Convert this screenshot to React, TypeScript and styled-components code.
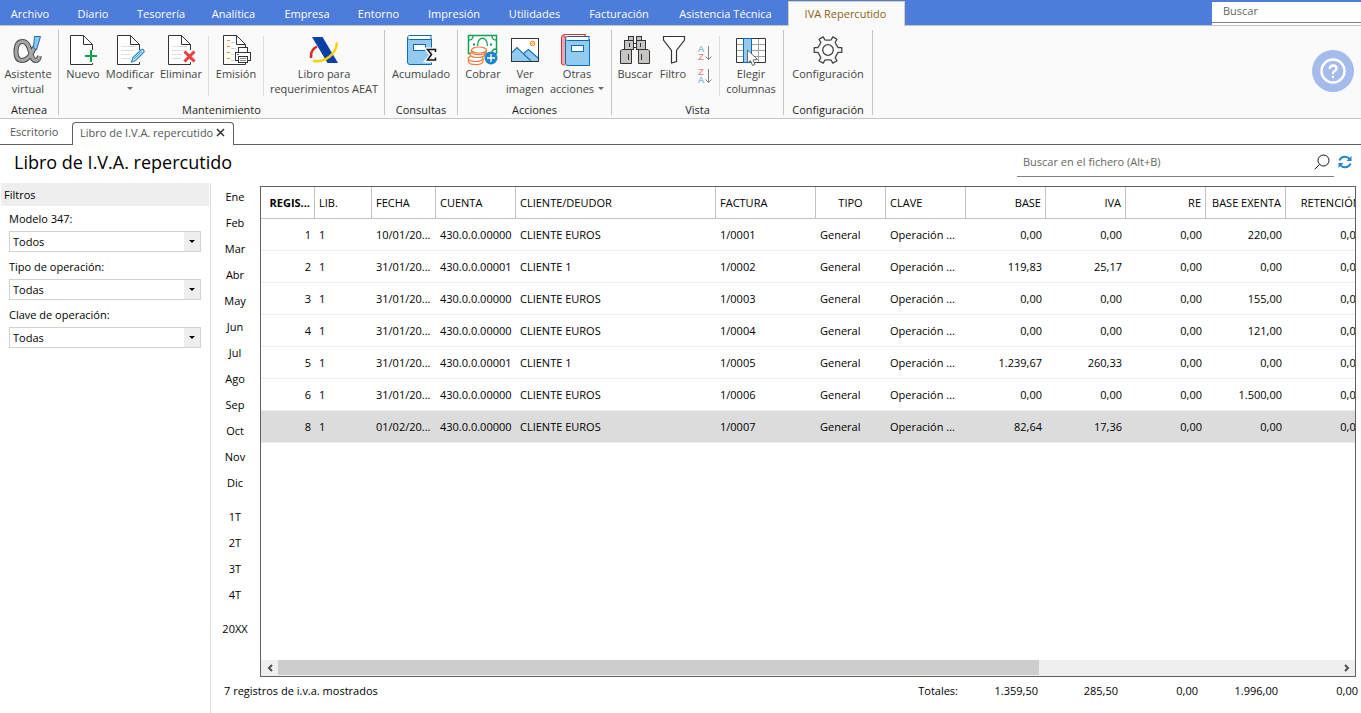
import React from 'react';
import styled, { createGlobalStyle, css } from 'styled-components';

const GlobalStyle = createGlobalStyle`
  *, *::before, *::after { box-sizing: border-box; }
  body {
    margin: 0;
    background: #fff;
    color: #000;
    font: 11px/15px "Open Sans", "Noto Sans", sans-serif;
  }
  button, input, select { font: inherit; color: inherit; border-radius: 0; }
  button { border: 0; padding: 0; margin: 0; background: none; cursor: pointer; }
`;

/* ---------- window frame ---------- */

const Page = styled.div`
  display: flex;
  flex-direction: column;
  min-height: 100vh;
  overflow: hidden;
`;

const MenuBar = styled.nav`
  display: flex;
  align-items: stretch;
  height: 26px;
  background: #4d7cdb;
  border-bottom: 1px solid #c3c3c3;
`;

const MenuItem = styled.button<{ $width: number; $active?: boolean }>`
  flex: none;
  width: ${p => p.$width}px;
  padding-top: 2px;
  color: #fff;
  white-space: nowrap;
  ${p => p.$active && css`
    margin: 1px 0 -1px;
    padding: 0 2px 2px 0;
    background: #fafafa;
    color: #8a6414;
    border: 1px solid #d8cfae;
    border-bottom: 0;
  `}
`;

const MenuSearch = styled.div`
  display: flex;
  width: 149px;
  margin-left: auto;
  padding-top: 2px;
  background: linear-gradient(#4d7cdb 2px, #fff 2px);
  input {
    width: 100%;
    height: 21px;
    padding: 0 11px 3px;
    border: 0;
    border-bottom: 1px solid #808080;
    outline: 0;
    background: #fff;
    &::placeholder { color: #666; opacity: 1; }
  }
`;

/* ---------- ribbon ---------- */

const Ribbon = styled.div`
  display: flex;
  height: 93px;
  background: #fafafa;
  border-bottom: 1px solid #c6c6c6;
`;

const Group = styled.section`
  display: flex;
  flex-direction: column;
  justify-content: space-between;
  flex: none;
  margin: 4px 0 3px;
  border-right: 1px solid #c3c3c3;
`;

const GroupTools = styled.div<{ $pad?: string }>`
  display: flex;
  align-items: flex-start;
  padding: ${p => p.$pad ?? '0'};
`;

const GroupTitle = styled.h2`
  margin: 0;
  font-size: 11px;
  font-weight: 400;
  line-height: 15px;
  text-align: center;
  color: #1a1a1a;
  height: 13px;
`;

const Tool = styled.button<{ $width: number }>`
  display: flex;
  flex-direction: column;
  align-items: center;
  flex: none;
  width: ${p => p.$width}px;
  padding-top: 4px;
  color: #444;
  white-space: nowrap;
  svg { display: block; flex: none; }
`;

const ToolLabel = styled.span`
  display: flex;
  flex-direction: column;
  align-items: center;
  line-height: 15px;
`;

const LabelLine = styled.span`
  display: flex;
  align-items: center;
  gap: 4px;
  min-height: 15px;
`;

const Caret = styled.i`
  border: 3px solid transparent;
  border-top-color: #666;
  border-bottom: 0;
`;

const Divider = styled.span`
  width: 1px;
  height: 60px;
  margin-top: 6px;
  background: #dedede;
`;

const SortTools = styled.div`
  display: flex;
  flex-direction: column;
  gap: 3px;
  width: 28px;
  padding: 13px 0 0 5px;
  svg { display: block; }
`;

const HelpButton = styled.button`
  align-self: center;
  margin: 0 7px 2px auto;
  width: 42px;
  height: 42px;
  border-radius: 50%;
  background: #a5bbec;
  display: grid;
  place-items: center;
`;

/* ---------- document tabs and heading ---------- */

const DocTabs = styled.div`
  display: flex;
  align-items: stretch;
  height: 26px;
  padding-top: 3px;
  border-bottom: 1px solid #606060;
  color: #555;
`;

const DocTab = styled.button<{ $width: number }>`
  width: ${p => p.$width}px;
  padding-left: 10px;
  padding-bottom: 4px;
  text-align: left;
`;

const ActiveTab = styled.div`
  display: flex;
  align-items: center;
  justify-content: space-between;
  width: 162px;
  margin-bottom: -1px;
  padding: 0 8px 4px 7px;
  background: #fff;
  border: 1px solid #606060;
  border-bottom: 0;
  border-radius: 4px 4px 0 0;
  white-space: nowrap;
  svg { display: block; }
`;

const Heading = styled.header`
  display: flex;
  align-items: flex-start;
  justify-content: space-between;
  height: 38px;
  padding: 5px 9px 0 14px;
  h1 {
    margin: 0;
    font-size: 18px;
    line-height: 24px;
    font-weight: 400;
  }
`;

const FileSearch = styled.div`
  display: flex;
  align-items: center;
  height: 27px;
  gap: 4px;
`;

const SearchField = styled.div`
  display: flex;
  align-items: center;
  width: 317px;
  height: 27px;
  padding: 0 4px 3px 6px;
  border-bottom: 1px solid #808080;
  input {
    flex: 1;
    min-width: 0;
    padding: 0;
    border: 0;
    outline: 0;
    background: none;
    &::placeholder { color: #666; opacity: 1; }
  }
`;

/* ---------- body ---------- */

const Body = styled.main`
  display: flex;
  flex: 1;
  min-height: 0;
`;

const Filters = styled.aside`
  flex: none;
  width: 211px;
  padding: 0 1px;
  border-right: 1px solid #dcdcdc;
  h2 {
    margin: 0;
    padding: 0 3px;
    font-size: 11px;
    line-height: 23px;
    font-weight: 400;
    background: #eee;
  }
`;

const Filter = styled.div`
  display: flex;
  flex-direction: column;
  padding: 0 8px 2px;
  label { padding: 5px 0; }
`;

const SelectBox = styled.div`
  position: relative;
  height: 21px;
  border: 1px solid #d2d2d2;
  background: #fff;
  select {
    display: block;
    width: 100%;
    height: 19px;
    padding: 0 20px 0 3px;
    border: 0;
    outline: 0;
    appearance: none;
    background: linear-gradient(#eee, #eee) right / 16px 100% no-repeat;
    line-height: 19px;
  }
  &::after {
    content: '';
    position: absolute;
    right: 5px;
    top: 8px;
    border: 3px solid transparent;
    border-top-color: #000;
    border-bottom: 0;
    pointer-events: none;
  }
`;

const Periods = styled.nav`
  display: flex;
  flex-direction: column;
  gap: 8px;
  flex: none;
  width: 48px;
  margin-right: 1px;
  div { display: flex; flex-direction: column; }
  button { height: 26px; }
`;

const GridColumn = styled.section`
  display: flex;
  flex-direction: column;
  flex: 1;
  min-width: 0;
  padding-top: 3px;
`;

const GridFrame = styled.div`
  display: flex;
  flex-direction: column;
  justify-content: space-between;
  flex: 1;
  margin-right: 5px;
  border: 1px solid #606060;
  overflow: hidden;
`;

const Table = styled.table`
  table-layout: fixed;
  width: 1105px;
  border-collapse: separate;
  border-spacing: 0;
`;

type Align = 'left' | 'right' | 'center';

const Th = styled.th<{ $align: Align; $strong?: boolean }>`
  height: 32px;
  padding: 0 4px;
  border-right: 1px solid #c3c3c3;
  border-bottom: 1px solid #c3c3c3;
  text-align: ${p => p.$align};
  font-weight: ${p => (p.$strong ? 700 : 400)};
  white-space: nowrap;
`;

const Row = styled.tr<{ $selected?: boolean }>`
  background: ${p => (p.$selected ? '#dcdcdc' : '#fff')};
`;

const Td = styled.td<{ $align: Align }>`
  height: 32px;
  padding: 0 4px;
  border-bottom: 1px solid #ececec;
  text-align: ${p => p.$align};
  white-space: nowrap;
`;

const ScrollBar = styled.div`
  display: grid;
  grid-template-columns: 17px 1fr 17px;
  height: 16px;
  background: #efefef;
  button { display: grid; place-items: center; }
`;

const Thumb = styled.div`
  width: 71.8%;
  height: 15px;
  background: #cdcdcd;
`;

const Footer = styled.footer`
  display: flex;
  justify-content: space-between;
  height: 36px;
  margin-left: -49px;
  padding: 6px 3px 0 13px;
`;

const Totals = styled.dl`
  display: flex;
  margin: 0;
  dt { text-align: right; }
  dd { width: 80px; margin: 0; text-align: right; }
`;

/* ---------- drawings ---------- */

const Svg = ({ children, size = 32 }: { children: React.ReactNode; size?: number }) => (
  <svg width={size} height={size} viewBox={`0 0 ${size} ${size}`} fill="none" aria-hidden="true">
    {children}
  </svg>
);

const Sheet = ({ ruled = true }: { ruled?: boolean }) => (
  <>
    <path d="M25.5 16V10.5L16.5 1.5H3.5V30.5H25.5V28" fill="#fff" stroke="#333" />
    <path d="M16.5 1.5V10.5H25.5Z" fill="#fff" stroke="#333" />
    {ruled && <path d="M7 12.5H22M7 16.5H20M7 20.5H17M7 24.5H16" stroke="#dedede" />}
  </>
);

const alphaStrokes = 'M10.5 7.500C5.500 7.500 4 12 4 17.500C4 23 6 26.500 10 26.500C15 26.500 19 22 22.500 13M10.500 7.500C20 7.500 17 26 23.500 26.500C26 26.500 27 25 27.500 22';

const AlphaIcon = () => (
  <Svg>
    <path d={alphaStrokes} stroke="#505050" strokeWidth="5" />
    <path d={alphaStrokes} stroke="#a6a6a6" strokeWidth="3" />
    <path d="M22.500 2.500H28.500L24.500 16L21.500 13.500Z" fill="#8fc8f0" stroke="#1a6fb5" />
  </Svg>
);

const NewIcon = () => (
  <Svg>
    <Sheet ruled={false} />
    <path d="M24 16V29M17.500 22.500H30" stroke="#fafafa" strokeWidth="5" />
    <path d="M24 16V28M18 22H30" stroke="#0ca54d" strokeWidth="2" />
  </Svg>
);

const EditIcon = () => (
  <Svg>
    <Sheet />
    <path d="M17.500 28L19 23.500L27.500 15.500C29 15 30.500 16.500 30 18L21.500 26.500Z" fill="#e6f3fc" stroke="#2088cc" strokeWidth="1.200" />
    <path d="M20 25L28 17.500" stroke="#2088cc" />
  </Svg>
);

const DeleteIcon = () => (
  <Svg>
    <Sheet />
    <path d="M19.500 17.500L29.500 27.500M29.500 17.500L19.500 27.500" stroke="#ee3b3b" strokeWidth="3" />
  </Svg>
);

const PrintIcon = () => (
  <Svg>
    <Sheet ruled={false} />
    <path d="M11 8.500H15M11 14.500H16M11 20.500H14M11 26.500H14" stroke="#d0d0d0" />
    <path d="M7 6.500H10M7 12.500H10M7 18.500H10M7 24.500H10" stroke="#f0951d" />
    <rect x="18.500" y="13.500" width="9" height="5" fill="#fff" stroke="#333" />
    <rect x="15.500" y="18.500" width="15" height="8" fill="#fff" stroke="#333" />
    <rect x="18.500" y="22.500" width="9" height="6" fill="#fff" stroke="#333" />
    <path d="M20 24.500H26M20 26.500H26" stroke="#888" />
    <path d="M17 20.500H19" stroke="#2088cc" />
  </Svg>
);

const AgencyIcon = () => (
  <Svg>
    <path d="M3 24C2.500 18 5 14.500 9 12.500" stroke="#e02424" strokeWidth="2.500" />
    <path d="M4 3H14.500L30 29H19.500Z" fill="#0a3fa6" />
    <path d="M5 27C17 28.500 28 21 29 8.500" stroke="#fad201" strokeWidth="2.500" />
  </Svg>
);

const LedgerIcon = () => (
  <Svg>
    <path d="M26.500 4.500V30.500H5C3.500 30.500 2.500 29.500 2.500 28V3" fill="#93caf0" stroke="#0f69b4" />
    <path d="M26.500 1.500H4.500C2 1.500 2 5.500 4.500 5.500H26.500C25.500 4 25.500 3 26.500 1.500Z" fill="#fff" stroke="#0f69b4" />
    <rect x="8.500" y="10.500" width="12" height="6" fill="#fff" stroke="#0f69b4" />
    <path d="M31 15.500H22L26.500 21L22 26.500H31" stroke="#fafafa" strokeWidth="4" />
    <path d="M30.500 18V15.500H22.500L26.500 20.500L22.500 26H30.500V23.500" stroke="#111" strokeWidth="1.500" />
  </Svg>
);

const CashIcon = () => (
  <Svg>
    <rect x="1.500" y="1.500" width="28" height="18" fill="#fff" stroke="#12a150" strokeWidth="1.500" />
    <path d="M2 6C5 6 6 4 6 2M25 2C25 4 26 6 29 6M25 19C25 16 27 15 29 15M10.500 12C10.500 1.500 20.500 1.500 20.500 12" stroke="#12a150" strokeWidth="1.300" />
    <path d="M6 10.500H8M23 10.500H25" stroke="#12a150" strokeWidth="2" />
    <g fill="#fff" stroke="#ee7b3a" strokeWidth="1.200">
      <path d="M1.500 24.500V28C3 31.500 14 31.500 16 28V24.500Z" />
      <ellipse cx="8.500" cy="24.500" rx="7.500" ry="3" />
      <ellipse cx="10.500" cy="20.500" rx="7.500" ry="3" />
      <path d="M4.500 16V18C6 21.500 17 21.500 19.500 18V16Z" />
      <ellipse cx="12" cy="16" rx="7.500" ry="3" />
    </g>
    <circle cx="24" cy="24" r="6.500" fill="#1f86ca" />
    <path d="M24 20V28M20 24H28" stroke="#fff" strokeWidth="1.300" />
  </Svg>
);

const PictureIcon = () => (
  <Svg>
    <rect x="2.500" y="4.500" width="27" height="23" fill="#fff" stroke="#333" />
    <path d="M3 19L8 13.500L14 20L20 15.500L29 24V27H3Z" fill="#93caf0" />
    <path d="M3 18.500L8 13.500L22 27M14 20L19.500 15.500L29 24" stroke="#1c74b8" strokeWidth="1.200" />
    <circle cx="23.500" cy="9.500" r="2.300" fill="#fdd596" stroke="#ef8a2b" />
  </Svg>
);

const BooksIcon = () => (
  <Svg>
    <path d="M24.500 1H3C1 1 .500 2 .500 4V29C.500 30.500 1 31 4 31" fill="#f3a6a6" stroke="#e03030" />
    <path d="M3 .500H24.500L23 3H3Z" fill="#fff" stroke="#e03030" />
    <path d="M28.500 5V31.500H7C5.500 31.500 4.500 30.500 4.500 29V4" fill="#93caf0" stroke="#0f69b4" />
    <path d="M28.500 2.500H6.500C4 2.500 4 6.500 6.500 6.500H28.500C27.500 5 27.500 4 28.500 2.500Z" fill="#fff" stroke="#0f69b4" />
    <rect x="10.500" y="11.500" width="12" height="6" fill="#fff" stroke="#0f69b4" />
  </Svg>
);

const BinocularsIcon = () => (
  <Svg>
    <g fill="#c6c5c3" stroke="#333">
      <rect x="9.500" y="2.500" width="5" height="4" />
      <rect x="17.500" y="2.500" width="5" height="4" />
      <rect x="14.500" y="9.500" width="3" height="4" fill="#fff" />
      <rect x="5.500" y="6.500" width="9" height="9" />
      <rect x="17.500" y="6.500" width="9" height="9" />
      <path d="M3 15.500H12.500V29.500H1.500V17Z" />
      <path d="M29 15.500H19.500V29.500H30.500V17Z" />
      <path d="M10.500 9V13M21.500 9V13M9.500 20V26M22.500 20V26" />
    </g>
  </Svg>
);

const FunnelIcon = () => (
  <Svg>
    <path d="M6.500 2.500H27.500V6L19.500 16.500V27.500L14.500 29V16.500L6.500 6Z" fill="#fff" stroke="#333" strokeWidth="1.200" />
  </Svg>
);

const SortIcon = ({ top, bottom }: { top: string; bottom: string }) => {
  const tint = (c: string) => (c === 'A' ? '#4a9fd8' : '#ef6a70');
  return (
    <svg width="17" height="20" viewBox="0 0 17 20" fill="none" aria-hidden="true">
      <g fontSize="9" fontFamily="Liberation Sans, sans-serif" textAnchor="middle">
        <text x="5" y="9" fill={tint(top)}>{top}</text>
        <text x="5" y="17" fill={tint(bottom)}>{bottom}</text>
      </g>
      <path d="M12.500 3V16.500M9.500 13.500L12.500 16.500L15.500 13.500" stroke="#808080" />
    </svg>
  );
};

const ColumnsIcon = () => (
  <Svg>
    <rect x="1.500" y="4.500" width="29" height="24" fill="#fff" />
    <path d="M2 10.500H30M2 16.500H30M2 22.500H30" stroke="#a0a0a0" />
    <path d="M23.500 5V28" stroke="#a0a0a0" />
    <path d="M8.500 28.500H1.500V4.500H30.500V28.500H17" stroke="#333" />
    <rect x="8.500" y="4.500" width="8" height="24" fill="#93caf0" stroke="#0f69b4" />
    <path d="M12.500 16V29L15.500 26.500L17.500 31.500L20 30.500L18 26L22.500 25.500Z" fill="#fff" stroke="#666" />
  </Svg>
);

const gearOutline = (() => {
  const points: string[] = [];
  const profile: Array<[number, number]> = [[-23, 10], [-13, 10.5], [-10, 14], [10, 14], [13, 10.5], [23, 10]];
  for (let tooth = 0; tooth < 6; tooth++) {
    profile.forEach(([deg, r]) => {
      const a = ((tooth * 60 + deg) * Math.PI) / 180;
      points.push(`${(16 + r * Math.cos(a)).toFixed(2)},${(16 + r * Math.sin(a)).toFixed(2)}`);
    });
  }
  return points.join(' ');
})();

const GearIcon = () => (
  <Svg>
    <polygon points={gearOutline} stroke="#444" strokeWidth="1.300" strokeLinejoin="round" />
    <circle cx="16" cy="16" r="5.300" stroke="#444" strokeWidth="1.300" />
  </Svg>
);

const HelpIcon = () => (
  <svg width="28" height="28" viewBox="0 0 28 28" fill="none" stroke="#fff" strokeWidth="2.400" strokeLinecap="round" aria-hidden="true">
    <circle cx="14" cy="14" r="11.500" />
    <path d="M10.800 11C11.500 7.500 17.500 7.500 17.500 11.500C17.500 14 14 14.200 14 16" />
    <path d="M14 19.800V20" />
  </svg>
);

const CloseIcon = () => (
  <svg width="9" height="9" viewBox="0 0 9 9" fill="none" aria-hidden="true">
    <path d="M1 1L8 8M8 1L1 8" stroke="#333" strokeWidth="1.500" />
  </svg>
);

const LensIcon = () => (
  <svg width="16" height="16" viewBox="0 0 16 16" fill="none" aria-hidden="true">
    <circle cx="9.500" cy="6.500" r="5.500" stroke="#111" />
    <path d="M5.500 10.500L.800 15.200" stroke="#111" />
  </svg>
);

const RefreshIcon = () => (
  <svg width="14" height="14" viewBox="0 0 14 14" fill="none" aria-hidden="true">
    <path d="M1.500 5.500C3 1 9 .500 11.500 4M12.500 8.500C11 13 5 13.500 2.500 10" stroke="#2088cc" strokeWidth="2" />
    <path d="M13.500 1V6H8.500ZM.500 13V8H5.500Z" fill="#2088cc" />
  </svg>
);

const Chevron = ({ flip = false }: { flip?: boolean }) => (
  <svg width="8" height="8" viewBox="0 0 8 8" fill="none" aria-hidden="true">
    <path d={flip ? 'M2 1L5 4L2 7' : 'M6 1L3 4L6 7'} stroke="#505050" strokeWidth="2" />
  </svg>
);

/* ---------- data ---------- */

const menu: Array<[string, number]> = [
  ['Archivo', 60], ['Diario', 66], ['Tesorería', 70], ['Analítica', 75], ['Empresa', 72], ['Entorno', 71],
  ['Impresión', 80], ['Utilidades', 81], ['Facturación', 88], ['Asistencia Técnica', 125], ['IVA Repercutido', 117],
];

const months = ['Ene', 'Feb', 'Mar', 'Abr', 'May', 'Jun', 'Jul', 'Ago', 'Sep', 'Oct', 'Nov', 'Dic'];
const periods = [months, ['1T', '2T', '3T', '4T'], ['20XX']];

const filters = [
  { id: 'modelo', label: 'Modelo 347:', value: 'Todos' },
  { id: 'tipo', label: 'Tipo de operación:', value: 'Todas' },
  { id: 'clave', label: 'Clave de operación:', value: 'Todas' },
];

const columns: Array<{ title: string; width: number; align: Align; head?: Align }> = [
  { title: 'REGIS...', width: 54, align: 'right' },
  { title: 'LIB.', width: 57, align: 'left' },
  { title: 'FECHA', width: 64, align: 'left' },
  { title: 'CUENTA', width: 80, align: 'left' },
  { title: 'CLIENTE/DEUDOR', width: 200, align: 'left' },
  { title: 'FACTURA', width: 100, align: 'left' },
  { title: 'TIPO', width: 70, align: 'left', head: 'center' },
  { title: 'CLAVE', width: 80, align: 'left' },
  { title: 'BASE', width: 80, align: 'right' },
  { title: 'IVA', width: 80, align: 'right' },
  { title: 'RE', width: 80, align: 'right' },
  { title: 'BASE EXENTA', width: 80, align: 'right' },
  { title: 'RETENCIÓN', width: 80, align: 'right' },
];

const record = (n: string, date: string, account: string, client: string, invoice: string, base: string, iva: string, exempt: string) =>
  [n, '1', date, account, client, invoice, 'General', 'Operación ...', base, iva, '0,00', exempt, '0,00'];

const rows = [
  record('1', '10/01/20...', '430.0.0.00000', 'CLIENTE EUROS', '1/0001', '0,00', '0,00', '220,00'),
  record('2', '31/01/20...', '430.0.0.00001', 'CLIENTE 1', '1/0002', '119,83', '25,17', '0,00'),
  record('3', '31/01/20...', '430.0.0.00000', 'CLIENTE EUROS', '1/0003', '0,00', '0,00', '155,00'),
  record('4', '31/01/20...', '430.0.0.00000', 'CLIENTE EUROS', '1/0004', '0,00', '0,00', '121,00'),
  record('5', '31/01/20...', '430.0.0.00001', 'CLIENTE 1', '1/0005', '1.239,67', '260,33', '0,00'),
  record('6', '31/01/20...', '430.0.0.00000', 'CLIENTE EUROS', '1/0006', '0,00', '0,00', '1.500,00'),
  record('8', '01/02/20...', '430.0.0.00000', 'CLIENTE EUROS', '1/0007', '82,64', '17,36', '0,00'),
];

const totals = ['1.359,50', '285,50', '0,00', '1.996,00', '0,00'];

/* ---------- parts ---------- */

interface ToolProps {
  icon: React.ReactNode;
  lines: string[];
  width: number;
  caret?: 'below' | 'beside';
}

const RibbonTool = ({ icon, lines, width, caret }: ToolProps) => (
  <Tool $width={width} type="button">
    {icon}
    <ToolLabel>
      {lines.map((line, i) => (
        <LabelLine key={line}>
          {line}
          {caret === 'beside' && i === lines.length - 1 && <Caret />}
        </LabelLine>
      ))}
      {caret === 'below' && <LabelLine><Caret /></LabelLine>}
    </ToolLabel>
  </Tool>
);

const RibbonGroup = ({ title, pad, children }: { title: string; pad?: string; children: React.ReactNode }) => (
  <Group>
    <GroupTools $pad={pad}>{children}</GroupTools>
    <GroupTitle>{title}</GroupTitle>
  </Group>
);

export default function App() {
  return (
    <Page>
      <GlobalStyle />
      <MenuBar>
        {menu.map(([name, width]) => (
          <MenuItem key={name} type="button" $width={width} $active={name === 'IVA Repercutido'}>{name}</MenuItem>
        ))}
        <MenuSearch>
          <input type="text" aria-label="Buscar" placeholder="Buscar" />
        </MenuSearch>
      </MenuBar>

      <Ribbon>
        <RibbonGroup title="Atenea" pad="0 2px 0 0">
          <RibbonTool icon={<AlphaIcon />} lines={['Asistente', 'virtual']} width={56} />
        </RibbonGroup>
        <RibbonGroup title="Mantenimiento" pad="0 0 0 1px">
          <RibbonTool icon={<NewIcon />} lines={['Nuevo']} width={46} />
          <RibbonTool icon={<EditIcon />} lines={['Modificar']} width={48} caret="below" />
          <RibbonTool icon={<DeleteIcon />} lines={['Eliminar']} width={54} />
          <Divider />
          <RibbonTool icon={<PrintIcon />} lines={['Emisión']} width={54} />
          <Divider />
          <RibbonTool icon={<AgencyIcon />} lines={['Libro para', 'requerimientos AEAT']} width={120} />
        </RibbonGroup>
        <RibbonGroup title="Consultas">
          <RibbonTool icon={<LedgerIcon />} lines={['Acumulado']} width={72} />
        </RibbonGroup>
        <RibbonGroup title="Acciones" pad="0 0 0 1px">
          <RibbonTool icon={<CashIcon />} lines={['Cobrar']} width={48} />
          <RibbonTool icon={<PictureIcon />} lines={['Ver', 'imagen']} width={36} />
          <RibbonTool icon={<BooksIcon />} lines={['Otras', 'acciones']} width={68} caret="beside" />
        </RibbonGroup>
        <RibbonGroup title="Vista" pad="0 1px 0 3px">
          <RibbonTool icon={<BinocularsIcon />} lines={['Buscar']} width={40} />
          <RibbonTool icon={<FunnelIcon />} lines={['Filtro']} width={36} />
          <SortTools>
            <button type="button" aria-label="Orden ascendente"><SortIcon top="A" bottom="Z" /></button>
            <button type="button" aria-label="Orden descendente"><SortIcon top="Z" bottom="A" /></button>
          </SortTools>
          <Divider />
          <RibbonTool icon={<ColumnsIcon />} lines={['Elegir', 'columnas']} width={62} />
        </RibbonGroup>
        <RibbonGroup title="Configuración">
          <RibbonTool icon={<GearIcon />} lines={['Configuración']} width={88} />
        </RibbonGroup>
        <HelpButton type="button" aria-label="Ayuda"><HelpIcon /></HelpButton>
      </Ribbon>

      <DocTabs>
        <DocTab type="button" $width={72}>Escritorio</DocTab>
        <ActiveTab>
          <span>Libro de I.V.A. repercutido</span>
          <button type="button" aria-label="Cerrar"><CloseIcon /></button>
        </ActiveTab>
      </DocTabs>

      <Heading>
        <h1>Libro de I.V.A. repercutido</h1>
        <FileSearch>
          <SearchField>
            <input type="text" aria-label="Buscar en el fichero" placeholder="Buscar en el fichero (Alt+B)" />
            <LensIcon />
          </SearchField>
          <button type="button" aria-label="Actualizar"><RefreshIcon /></button>
        </FileSearch>
      </Heading>

      <Body>
        <Filters>
          <h2>Filtros</h2>
          {filters.map(f => (
            <Filter key={f.id}>
              <label htmlFor={f.id}>{f.label}</label>
              <SelectBox>
                <select id={f.id} defaultValue={f.value}><option>{f.value}</option></select>
              </SelectBox>
            </Filter>
          ))}
        </Filters>

        <Periods>
          {periods.map(group => (
            <div key={group[0]}>
              {group.map(p => <button key={p} type="button">{p}</button>)}
            </div>
          ))}
        </Periods>

        <GridColumn>
          <GridFrame>
            <Table>
              <colgroup>{columns.map(c => <col key={c.title} width={c.width} />)}</colgroup>
              <thead>
                <tr>
                  {columns.map((c, i) => (
                    <Th key={c.title} $align={c.head ?? c.align} $strong={i === 0}>{c.title}</Th>
                  ))}
                </tr>
              </thead>
              <tbody>
                {rows.map(r => (
                  <Row key={r[0]} $selected={r[0] === '8'}>
                    {r.map((cell, i) => <Td key={columns[i].title} $align={columns[i].align}>{cell}</Td>)}
                  </Row>
                ))}
              </tbody>
            </Table>
            <ScrollBar>
              <button type="button" aria-label="Izquierda"><Chevron /></button>
              <Thumb />
              <button type="button" aria-label="Derecha"><Chevron flip /></button>
            </ScrollBar>
          </GridFrame>
          <Footer>
            <span>7 registros de i.v.a. mostrados</span>
            <Totals>
              <dt>Totales:</dt>
              {totals.map((t, i) => <dd key={i}>{t}</dd>)}
            </Totals>
          </Footer>
        </GridColumn>
      </Body>
    </Page>
  );
}
